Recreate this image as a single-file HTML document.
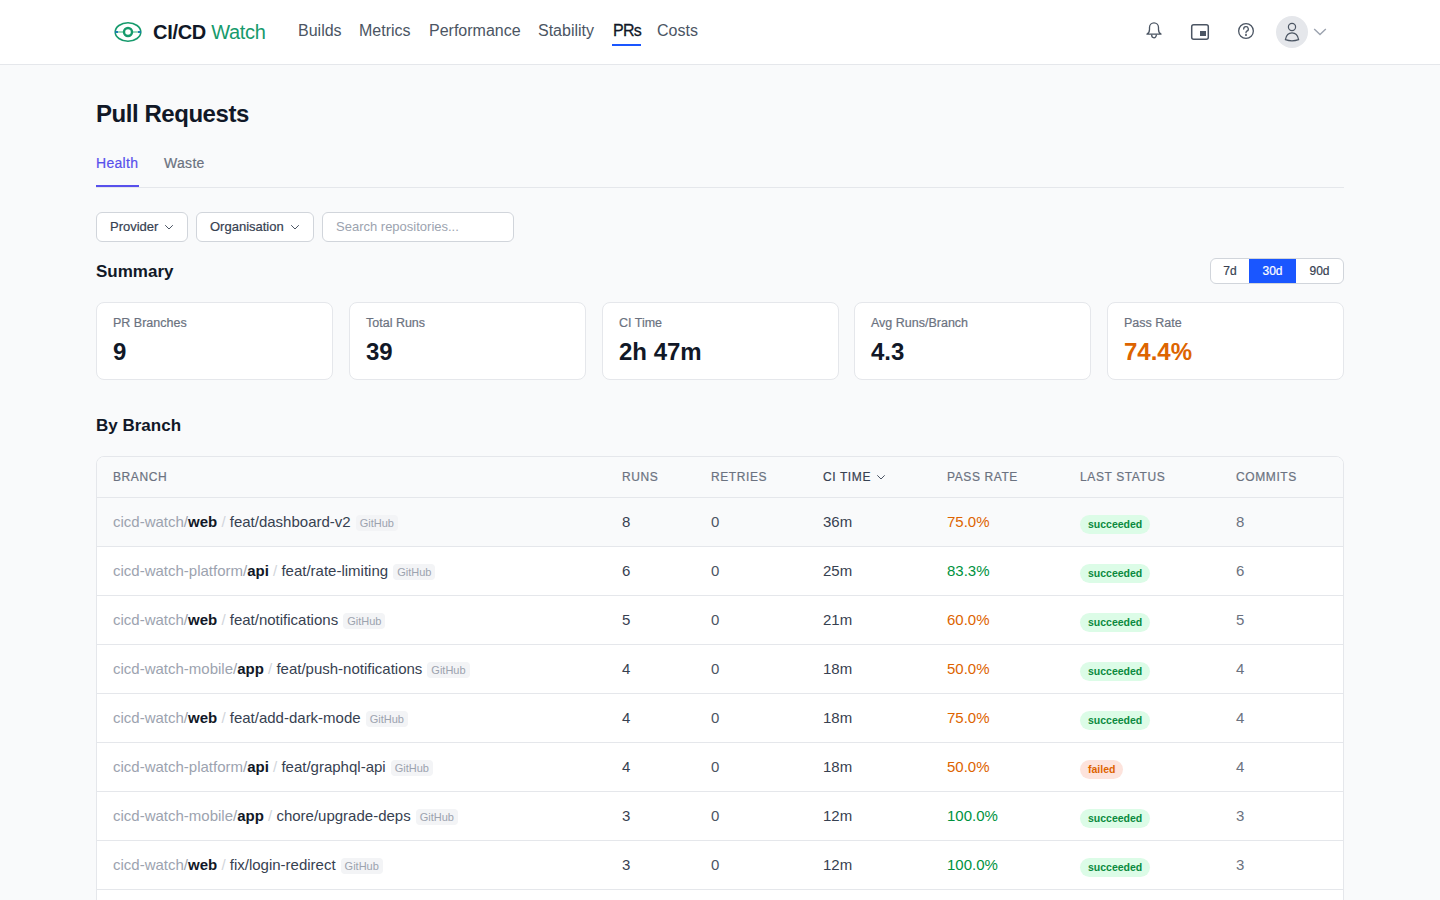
<!DOCTYPE html>
<html><head><meta charset="utf-8"><title>CI/CD Watch</title>
<style>
*{box-sizing:border-box;margin:0;padding:0}
html,body{width:1440px;height:900px;overflow:hidden}
body{font-family:"Liberation Sans",sans-serif;background:#f9fafb;color:#111827;position:relative}
.hdr{position:absolute;left:0;top:0;width:1440px;height:65px;background:#fff;border-bottom:1px solid #e5e7eb}
.abs{position:absolute;white-space:nowrap}
.med{-webkit-text-stroke:0.2px currentColor}
.logo-t{left:153px;top:20px;font-size:20px;line-height:24px;font-weight:700;color:#111827;letter-spacing:-0.3px}
.logo-t span{font-weight:400;color:#169a6c}
.nav{top:20px;font-size:16px;line-height:22px;color:#4b5563}
.nav.act{color:#111827;-webkit-text-stroke:0.3px currentColor;letter-spacing:-0.7px}
.navul{left:612px;top:44px;width:29px;height:2px;background:#1a56ff}
h1.abs{left:96px;top:99px;font-size:24px;line-height:30px;font-weight:700;color:#111827;letter-spacing:-0.45px}
.tab{top:154px;font-size:14px;line-height:18px;color:#6b7280;letter-spacing:0.3px;-webkit-text-stroke:0.2px currentColor}
.tab.act{color:#5850ec}
.tabline{left:96px;top:187px;width:1248px;height:1px;background:#e5e7eb}
.tabul{left:96px;top:185px;width:43px;height:2px;background:#5850ec}
.btn{top:212px;height:30px;background:#fff;border:1px solid #d1d5db;border-radius:6px;font-size:13px;color:#374151;line-height:28px;-webkit-text-stroke:0.2px currentColor}
.search{left:322px;top:212px;width:192px;height:30px;background:#fff;border:1px solid #d1d5db;border-radius:6px;font-size:13px;color:#9ca3af;line-height:28px;padding-left:13px}
h2.abs{font-size:17px;line-height:24px;font-weight:700;color:#111827}
.seg{left:1210px;top:258px;width:134px;height:26px;background:#fff;border:1px solid #d1d5db;border-radius:6px;overflow:hidden;font-size:12px;color:#374151;-webkit-text-stroke:0.2px currentColor}
.seg div{position:absolute;top:0;height:24px;line-height:24px;text-align:center}
.card{top:302px;width:237px;height:78px;background:#fff;border:1px solid #e5e7eb;border-radius:8px}
.card .l{position:absolute;left:16px;top:12px;font-size:12.5px;line-height:16px;color:#6b7280;white-space:nowrap;-webkit-text-stroke:0.2px currentColor}
.card .v{position:absolute;left:16px;top:34px;font-size:24px;line-height:30px;color:#111827;font-weight:700;white-space:nowrap}
.tbl{left:96px;top:456px;width:1248px;height:460px;background:#fff;border:1px solid #e5e7eb;border-radius:8px;overflow:hidden}
.th{position:absolute;left:0;top:0;width:1246px;height:41px;background:#f9fafb;border-bottom:1px solid #e5e7eb}
.th div{position:absolute;top:13px;font-size:12px;line-height:14px;letter-spacing:0.6px;color:#6b7280;white-space:nowrap;-webkit-text-stroke:0.2px currentColor}
.th .chev{position:absolute;left:53px;top:3px}
.row{position:absolute;left:0;width:1246px;height:49px;border-bottom:1px solid #e5e7eb;background:#fff}
.row.hov{background:#f9fafb}
.row .c{position:absolute;top:14px;font-size:15px;line-height:20px;color:#374151;white-space:nowrap}
.row .rt{color:#4b5563}
.row .cm{color:#6b7280}
.rp{color:#9ca3af}
.rn{color:#111827;font-weight:700}
.sl{color:#d1d5db}
.br{color:#374151}
.gh{display:inline-block;vertical-align:0px;margin-left:5px;background:#f3f4f6;color:#9ca3af;font-size:11px;line-height:16px;height:16px;padding:0 4px;border-radius:4px}
.row .badge{position:absolute;top:17px;height:19px;line-height:19px;padding:0 8px;border-radius:10px;font-size:10.5px;font-weight:700}
.ok{background:#dcfce7;color:#0b8a40}
.bad{background:#fde3dc;color:#dd6400}
.or{color:#dd6400 !important}
.gr{color:#00923e !important}
</style></head>
<body>
<div class="hdr"></div>
<svg class="abs" style="left:112px;top:20px" width="32" height="24" viewBox="0 0 32 24">
  <ellipse cx="16" cy="12" rx="12.8" ry="9.2" fill="none" stroke="#169a6c" stroke-width="1.6"/>
  <line x1="3" y1="12" x2="29" y2="12" stroke="#86d3ae" stroke-width="1.7"/>
  <rect x="3" y="11.15" width="3" height="1.7" fill="#0a6fb0"/>
  <rect x="26" y="11.15" width="3" height="1.7" fill="#0a6fb0"/>
  <circle cx="16" cy="12" r="4" fill="#fff" stroke="#169a6c" stroke-width="2.4"/>
</svg>
<div class="abs logo-t">CI/CD <span>Watch</span></div>
<div class="abs nav" style="left:298px">Builds</div>
<div class="abs nav" style="left:359px">Metrics</div>
<div class="abs nav" style="left:429px">Performance</div>
<div class="abs nav" style="left:538px">Stability</div>
<div class="abs nav act" style="left:613px">PRs</div>
<div class="abs nav" style="left:657px">Costs</div>
<div class="abs navul"></div>

<!-- header icons -->
<svg class="abs" style="left:1144px;top:21px" width="20" height="20" viewBox="0 0 20 20" fill="none" stroke="#4b5563" stroke-width="1.3" stroke-linejoin="round">
  <path d="M3 13.2 C4.9 12.2 5.5 10.6 5.5 8.6 V6.6 A4.5 4.7 0 0 1 14.5 6.6 V8.6 C14.5 10.6 15.1 12.2 17 13.2 Z"/>
  <path d="M7.6 13.6 A2.4 3.2 0 0 0 12.4 13.6"/>
</svg>
<svg class="abs" style="left:1190px;top:23px" width="20" height="18" viewBox="0 0 20 18" fill="none">
  <rect x="1.7" y="1.7" width="16.6" height="14.6" rx="2" stroke="#4b5563" stroke-width="1.5"/>
  <rect x="10" y="8" width="6" height="5" fill="#4b5563"/>
</svg>
<svg class="abs" style="left:1236px;top:21px" width="20" height="20" viewBox="0 0 20 20" fill="none" stroke="#4b5563" stroke-width="1.3" stroke-linecap="round">
  <circle cx="10" cy="10" r="7.35"/>
  <path d="M7.7 8 A2.3 2.3 0 1 1 10.6 10.2 C10.1 10.5 10 10.9 10 11.8"/>
  <circle cx="10" cy="14" r="0.4" fill="#4b5563"/>
</svg>
<div class="abs" style="left:1276px;top:16px;width:32px;height:32px;border-radius:16px;background:#e5e7eb"></div>
<svg class="abs" style="left:1276px;top:16px" width="32" height="32" viewBox="0 0 32 32" fill="none" stroke="#4b5563" stroke-width="1.2">
  <circle cx="16" cy="11" r="3.6"/>
  <path d="M9.4 23.6 C10.2 19.3 12.6 16.9 16 16.9 C19.4 16.9 21.8 19.3 22.6 23.6 C19 24.9 13 24.9 9.4 23.6 Z"/>
</svg>
<svg class="abs" style="left:1312px;top:26px" width="16" height="12" viewBox="0 0 16 12" fill="none" stroke="#9ca3af" stroke-width="1.4">
  <path d="M2.2 3 L8 8.6 L13.8 3"/>
</svg>

<h1 class="abs">Pull Requests</h1>
<div class="abs tab act" style="left:96px">Health</div>
<div class="abs tab" style="left:164px">Waste</div>
<div class="abs tabline"></div>
<div class="abs tabul"></div>

<div class="abs btn" style="left:96px;width:92px;padding-left:13px">Provider</div>
<svg class="abs" style="left:163px;top:221px" width="12" height="12" viewBox="0 0 12 12" fill="none" stroke="#4b5563" stroke-width="1"><path d="M2.2 4.2 L6 8 L9.8 4.2"/></svg>
<div class="abs btn" style="left:196px;width:118px;padding-left:13px">Organisation</div>
<svg class="abs" style="left:289px;top:221px" width="12" height="12" viewBox="0 0 12 12" fill="none" stroke="#4b5563" stroke-width="1"><path d="M2.2 4.2 L6 8 L9.8 4.2"/></svg>
<div class="abs search">Search repositories...</div>

<h2 class="abs" style="left:96px;top:260px">Summary</h2>
<div class="abs seg">
  <div style="left:0;width:38px">7d</div>
  <div style="left:38px;width:47px;background:#1a56ff;color:#fff">30d</div>
  <div style="left:85px;width:47px">90d</div>
</div>

<div class="abs card" style="left:96px"><div class="l">PR Branches</div><div class="v">9</div></div>
<div class="abs card" style="left:349px"><div class="l">Total Runs</div><div class="v">39</div></div>
<div class="abs card" style="left:602px"><div class="l">CI Time</div><div class="v">2h 47m</div></div>
<div class="abs card" style="left:854px"><div class="l">Avg Runs/Branch</div><div class="v">4.3</div></div>
<div class="abs card" style="left:1107px"><div class="l">Pass Rate</div><div class="v or">74.4%</div></div>

<h2 class="abs" style="left:96px;top:414px">By Branch</h2>

<div class="abs tbl">
  <div class="th">
    <div style="left:16px">BRANCH</div>
    <div style="left:525px">RUNS</div>
    <div style="left:614px">RETRIES</div>
    <div style="left:726px;color:#374151">CI TIME<svg class="chev" width="10" height="8" viewBox="0 0 10 8" fill="none" stroke="#374151" stroke-width="0.9"><path d="M1.3 2.3 L5 6 L8.7 2.3"/></svg></div>
    <div style="left:850px">PASS RATE</div>
    <div style="left:983px">LAST STATUS</div>
    <div style="left:1139px">COMMITS</div>
  </div>
  <div class="row hov" style="top:41px"><div class="c" style="left:16px"><span class="rp">cicd-watch/</span><span class="rn">web</span> <span class="sl">/</span> <span class="br">feat/dashboard-v2</span><span class="gh">GitHub</span></div><div class="c" style="left:525px">8</div><div class="c rt" style="left:614px">0</div><div class="c" style="left:726px">36m</div><div class="c or" style="left:850px">75.0%</div><div class="badge ok" style="left:983px">succeeded</div><div class="c cm" style="left:1139px">8</div></div>
  <div class="row" style="top:90px"><div class="c" style="left:16px"><span class="rp">cicd-watch-platform/</span><span class="rn">api</span> <span class="sl">/</span> <span class="br">feat/rate-limiting</span><span class="gh">GitHub</span></div><div class="c" style="left:525px">6</div><div class="c rt" style="left:614px">0</div><div class="c" style="left:726px">25m</div><div class="c gr" style="left:850px">83.3%</div><div class="badge ok" style="left:983px">succeeded</div><div class="c cm" style="left:1139px">6</div></div>
  <div class="row" style="top:139px"><div class="c" style="left:16px"><span class="rp">cicd-watch/</span><span class="rn">web</span> <span class="sl">/</span> <span class="br">feat/notifications</span><span class="gh">GitHub</span></div><div class="c" style="left:525px">5</div><div class="c rt" style="left:614px">0</div><div class="c" style="left:726px">21m</div><div class="c or" style="left:850px">60.0%</div><div class="badge ok" style="left:983px">succeeded</div><div class="c cm" style="left:1139px">5</div></div>
  <div class="row" style="top:188px"><div class="c" style="left:16px"><span class="rp">cicd-watch-mobile/</span><span class="rn">app</span> <span class="sl">/</span> <span class="br">feat/push-notifications</span><span class="gh">GitHub</span></div><div class="c" style="left:525px">4</div><div class="c rt" style="left:614px">0</div><div class="c" style="left:726px">18m</div><div class="c or" style="left:850px">50.0%</div><div class="badge ok" style="left:983px">succeeded</div><div class="c cm" style="left:1139px">4</div></div>
  <div class="row" style="top:237px"><div class="c" style="left:16px"><span class="rp">cicd-watch/</span><span class="rn">web</span> <span class="sl">/</span> <span class="br">feat/add-dark-mode</span><span class="gh">GitHub</span></div><div class="c" style="left:525px">4</div><div class="c rt" style="left:614px">0</div><div class="c" style="left:726px">18m</div><div class="c or" style="left:850px">75.0%</div><div class="badge ok" style="left:983px">succeeded</div><div class="c cm" style="left:1139px">4</div></div>
  <div class="row" style="top:286px"><div class="c" style="left:16px"><span class="rp">cicd-watch-platform/</span><span class="rn">api</span> <span class="sl">/</span> <span class="br">feat/graphql-api</span><span class="gh">GitHub</span></div><div class="c" style="left:525px">4</div><div class="c rt" style="left:614px">0</div><div class="c" style="left:726px">18m</div><div class="c or" style="left:850px">50.0%</div><div class="badge bad" style="left:983px">failed</div><div class="c cm" style="left:1139px">4</div></div>
  <div class="row" style="top:335px"><div class="c" style="left:16px"><span class="rp">cicd-watch-mobile/</span><span class="rn">app</span> <span class="sl">/</span> <span class="br">chore/upgrade-deps</span><span class="gh">GitHub</span></div><div class="c" style="left:525px">3</div><div class="c rt" style="left:614px">0</div><div class="c" style="left:726px">12m</div><div class="c gr" style="left:850px">100.0%</div><div class="badge ok" style="left:983px">succeeded</div><div class="c cm" style="left:1139px">3</div></div>
  <div class="row" style="top:384px"><div class="c" style="left:16px"><span class="rp">cicd-watch/</span><span class="rn">web</span> <span class="sl">/</span> <span class="br">fix/login-redirect</span><span class="gh">GitHub</span></div><div class="c" style="left:525px">3</div><div class="c rt" style="left:614px">0</div><div class="c" style="left:726px">12m</div><div class="c gr" style="left:850px">100.0%</div><div class="badge ok" style="left:983px">succeeded</div><div class="c cm" style="left:1139px">3</div></div>
  <div class="row" style="top:433px"><div class="c" style="left:16px"><span class="rp">cicd-watch/</span><span class="rn">web</span> <span class="sl">/</span> <span class="br">fix/header-layout</span><span class="gh">GitHub</span></div><div class="c" style="left:525px">2</div><div class="c rt" style="left:614px">0</div><div class="c" style="left:726px">8m</div><div class="c gr" style="left:850px">100.0%</div><div class="badge ok" style="left:983px">succeeded</div><div class="c cm" style="left:1139px">2</div></div>
</div>
</body></html>
